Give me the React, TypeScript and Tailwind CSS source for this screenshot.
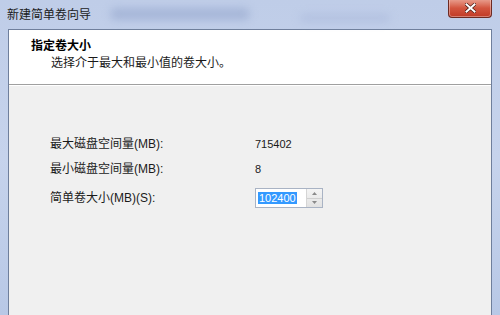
import React from 'react';

const cjk = "font-['Liberation_Sans','Noto_Sans_CJK_SC',sans-serif]";

function CloseButton() {
  return (
    <div className="w-[44px] h-[19px] mt-[-1px] rounded-b-[4px] border border-t-0 border-[#6d2a22] bg-gradient-to-b from-[#e9a192] via-[#d3553f] to-[#c03a26] flex items-center justify-center shadow-[inset_0_0_0_1px_rgba(255,255,255,0.35)]">
      <svg width="11" height="10" viewBox="0 0 11 10">
        <path d="M1.5 1.5 L9.5 8.5 M9.5 1.5 L1.5 8.5" stroke="#4a1a14" strokeWidth="3.4" strokeLinecap="square" />
        <path d="M1.5 1.5 L9.5 8.5 M9.5 1.5 L1.5 8.5" stroke="#ffffff" strokeWidth="2" strokeLinecap="square" />
      </svg>
    </div>
  );
}

function Spinner() {
  return (
    <div className="w-[16px] h-full border-l border-[#d5d5d5] bg-gradient-to-b from-[#f4f4f4] to-[#e2e2e2] flex flex-col">
      <div className="flex-1 flex items-center justify-center border-b border-[#d0d0d0]">
        <svg width="5" height="3" viewBox="0 0 5 3"><path d="M0 3 L2.5 0 L5 3 Z" fill="#8a8a8a" /></svg>
      </div>
      <div className="flex-1 flex items-center justify-center">
        <svg width="5" height="3" viewBox="0 0 5 3"><path d="M0 0 L2.5 3 L5 0 Z" fill="#8a8a8a" /></svg>
      </div>
    </div>
  );
}

function Row({ label, className, children }: { label: string; className?: string; children: React.ReactNode }) {
  return (
    <div className={`flex items-center ${className ?? 'h-[20px]'}`}>
      <div className="w-[205px] text-[12px] text-[#1a1a1a] leading-none">{label}</div>
      <div className="flex items-center text-[11px] text-[#1a1a1a]">{children}</div>
    </div>
  );
}

export default function App() {
  return (
    <div className={`w-[500px] h-[315px] overflow-hidden flex flex-col bg-gradient-to-b from-[#bfcde8] via-[#c6d3ec] to-[#b8c8e6] ${cjk}`}>
      <div className="relative h-[29px] flex items-start justify-between pl-[7px] pr-[8px] shrink-0">
        <div className="absolute left-[110px] top-[8px] w-[140px] h-[12px] rounded-full bg-[#8d9fc8] opacity-50 blur-[4px]" />
        <div className="absolute left-[300px] top-[14px] w-[90px] h-[8px] rounded-full bg-[#a5b4d8] opacity-50 blur-[4px]" />
        <span className="relative mt-[8px] text-[12px] leading-[14px] text-[#1b1b1b]">新建简单卷向导</span>
        <div className="relative"><CloseButton /></div>
      </div>
      <div className="flex-1 mx-[8px] flex flex-col border-l border-r border-t border-[#6f7f9c]">
        <div className="h-[55px] bg-white border-b border-[#a0a0a0] pl-[22px] pt-[9px]">
          <div className="text-[12px] font-bold leading-[14px] text-black">指定卷大小</div>
          <div className="pl-[20px] mt-[3px] text-[12px] leading-[14px] text-[#1a1a1a]">选择介于最大和最小值的卷大小。</div>
        </div>
        <div className="flex-1 bg-[#f0f0f0] border-t border-white pl-[41px] pt-[48px] flex flex-col">
          <Row label="最大磁盘空间量(MB):">715402</Row>
          <Row label="最小磁盘空间量(MB):" className="h-[20px] mt-[5px]">8</Row>
          <Row label="简单卷大小(MB)(S):" className="h-[22px] mt-[8px]">
            <div className="w-[68px] h-[20px] bg-white border border-[#a9b3c4] flex items-center">
              <div className="flex-1 pl-[2px]">
                <span className="bg-[#3399ff] text-white px-[1px] leading-[14px]">102400</span>
              </div>
              <Spinner />
            </div>
          </Row>
        </div>
      </div>
    </div>
  );
}
